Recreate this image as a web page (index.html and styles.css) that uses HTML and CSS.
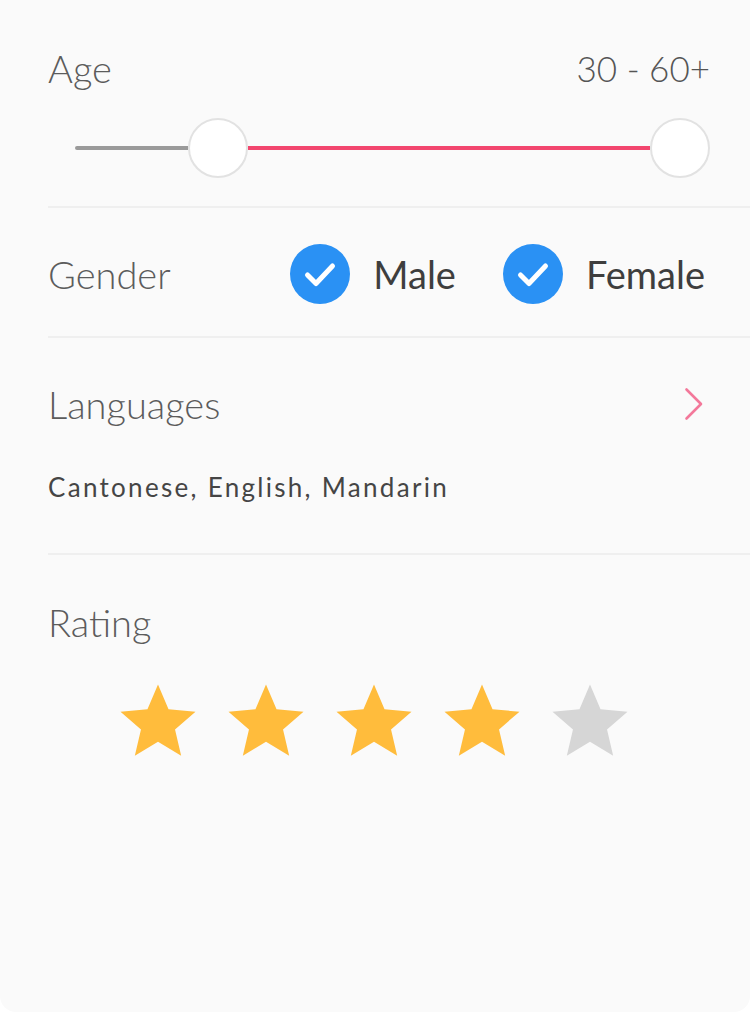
FILE: index.html
```html
<!DOCTYPE html>
<html>
<head>
<meta charset="utf-8">
<link rel="stylesheet" href="styles.css">
</head>
<body>
<div class="card">
  <section class="block age">
    <div class="row head">
      <span class="label">Age</span>
      <span class="value">30 - 60+</span>
    </div>
    <div class="slider">
      <div class="seg seg-off"></div>
      <div class="thumb"></div>
      <div class="seg seg-on"></div>
      <div class="thumb"></div>
    </div>
  </section>

  <section class="block gender">
    <span class="label">Gender</span>
    <div class="options">
      <div class="opt">
        <span class="check"><svg viewBox="0 0 60 60" width="60" height="60"><circle cx="30" cy="30" r="30" fill="#2a91f4"/><path d="M17.5 31 L26 39.5 L42.5 22" fill="none" stroke="#fff" stroke-width="5" stroke-linecap="round" stroke-linejoin="round"/></svg></span>
        <span class="opt-text">Male</span>
      </div>
      <div class="opt">
        <span class="check"><svg viewBox="0 0 60 60" width="60" height="60"><circle cx="30" cy="30" r="30" fill="#2a91f4"/><path d="M17.5 31 L26 39.5 L42.5 22" fill="none" stroke="#fff" stroke-width="5" stroke-linecap="round" stroke-linejoin="round"/></svg></span>
        <span class="opt-text">Female</span>
      </div>
    </div>
  </section>

  <section class="block langs">
    <div class="row head">
      <span class="label">Languages</span>
      <svg class="chev" viewBox="0 0 20 34" width="20" height="34"><path d="M2.5 2.5 L17 17 L2.5 31.5" fill="none" stroke="#f3789a" stroke-width="2.6" stroke-linecap="round" stroke-linejoin="round"/></svg>
    </div>
    <div class="lang-list">Cantonese, English, Mandarin</div>
  </section>

  <section class="block rating">
    <div class="row head">
      <span class="label">Rating</span>
    </div>
    <div class="stars">
      <svg class="star on" viewBox="0 0 24 24" width="90" height="90"><path d="M12 17.27L18.18 21l-1.64-7.03L22 9.24l-7.19-.61L12 2 9.19 8.63 2 9.24l5.46 4.73L5.82 21z"/></svg>
      <svg class="star on" viewBox="0 0 24 24" width="90" height="90"><path d="M12 17.27L18.18 21l-1.64-7.03L22 9.24l-7.19-.61L12 2 9.19 8.63 2 9.24l5.46 4.73L5.82 21z"/></svg>
      <svg class="star on" viewBox="0 0 24 24" width="90" height="90"><path d="M12 17.27L18.18 21l-1.64-7.03L22 9.24l-7.19-.61L12 2 9.19 8.63 2 9.24l5.46 4.73L5.82 21z"/></svg>
      <svg class="star on" viewBox="0 0 24 24" width="90" height="90"><path d="M12 17.27L18.18 21l-1.64-7.03L22 9.24l-7.19-.61L12 2 9.19 8.63 2 9.24l5.46 4.73L5.82 21z"/></svg>
      <svg class="star off" viewBox="0 0 24 24" width="90" height="90"><path d="M12 17.27L18.18 21l-1.64-7.03L22 9.24l-7.19-.61L12 2 9.19 8.63 2 9.24l5.46 4.73L5.82 21z"/></svg>
    </div>
  </section>
</div>
</body>
</html>
```

FILE: styles.css
```css
html, body {
  margin: 0;
  padding: 0;
  background: #ffffff;
}

body {
  font-family: "Lato", "Liberation Sans", sans-serif;
}

.card {
  box-sizing: border-box;
  width: 750px;
  height: 1012px;
  background: #fafafa;
  border-radius: 0 0 16px 16px;
  padding-left: 48px;
}

.block {
  border-bottom: 2px solid #efefef;
  padding-right: 40px;
}

.block.rating {
  border-bottom: none;
}

.row {
  display: flex;
  justify-content: space-between;
  align-items: center;
}

.label,
.value {
  font-size: 38px;
  line-height: 46px;
  font-weight: 300;
  color: #5c5c5c;
}

.value {
  font-size: 35px;
  color: #555555;
}

.age {
  padding-top: 45px;
  padding-bottom: 28px;
}

.slider {
  display: flex;
  align-items: center;
  height: 60px;
  margin-top: 27px;
  margin-left: 27px;
}

.seg {
  height: 4px;
}

.seg-off {
  width: 113px;
  background: #9a9a9a;
  border-radius: 2px 0 0 2px;
}

.seg-on {
  flex: 1;
  background: #f2466e;
}

.thumb {
  box-sizing: border-box;
  width: 60px;
  height: 60px;
  border-radius: 50%;
  background: #ffffff;
  border: 2px solid #e2e2e2;
}

.gender {
  display: flex;
  justify-content: space-between;
  align-items: center;
  padding-top: 36px;
  padding-bottom: 32px;
  padding-right: 45px;
}

.options {
  display: flex;
  align-items: center;
  gap: 47px;
}

.opt {
  display: flex;
  align-items: center;
  gap: 23px;
}

.check {
  display: block;
  width: 60px;
  height: 60px;
}

.check svg {
  display: block;
}

.opt-text {
  font-size: 38px;
  line-height: 46px;
  color: #3e3e3e;
}

.langs {
  padding-top: 43px;
  padding-bottom: 51px;
  padding-right: 46px;
}

.chev {
  display: block;
}

.lang-list {
  margin-top: 45px;
  font-size: 26px;
  line-height: 30px;
  letter-spacing: 2.3px;
  color: #454545;
}

.rating {
  padding-top: 44px;
}

.stars {
  display: flex;
  gap: 18px;
  margin-top: 32px;
  margin-left: 65px;
}

.star {
  display: block;
}

.star.on {
  fill: #ffbc3c;
}

.star.off {
  fill: #d6d6d6;
}
```
